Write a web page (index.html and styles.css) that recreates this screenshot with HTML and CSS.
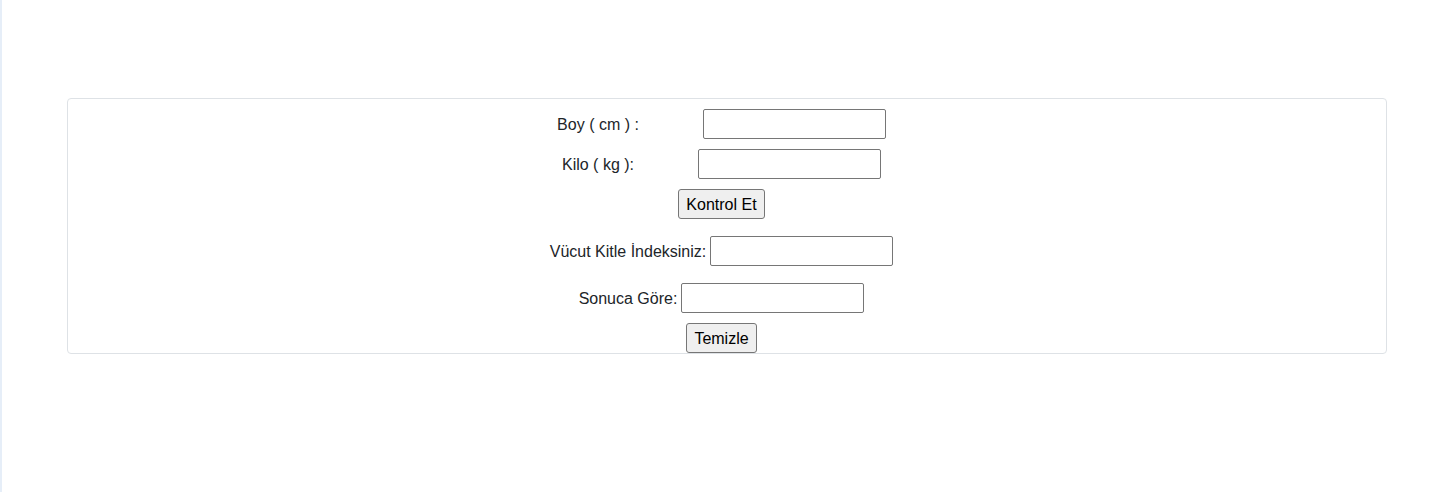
FILE: index.html
```html
<!DOCTYPE html>
<html lang="tr">
<head>
<meta charset="utf-8">
<title>Vücut Kitle İndeksi</title>
<link rel="stylesheet" href="styles.css">
</head>
<body>
<div class="page">
  <div class="strip"></div>
  <main class="main">
    <div class="card">
      <div class="row row-first">
        <label class="label label-wide">Boy ( cm ) :</label>
        <input class="field" type="text">
      </div>
      <div class="row row-gap">
        <label class="label label-wide">Kilo ( kg ):</label>
        <input class="field" type="text">
      </div>
      <div class="row row-gap">
        <button class="btn" type="button">Kontrol Et</button>
      </div>
      <div class="row row-gap-lg">
        <label class="label">Vücut Kitle İndeksiniz:</label>
        <input class="field" type="text">
      </div>
      <div class="row row-gap-lg">
        <label class="label">Sonuca Göre:</label>
        <input class="field" type="text">
      </div>
      <div class="row row-gap">
        <button class="btn" type="button">Temizle</button>
      </div>
    </div>
  </main>
</div>
</body>
</html>
```
FILE: styles.css
```css
html, body {
  margin: 0;
  padding: 0;
  background: #ffffff;
}
body {
  font-family: "Liberation Sans", Arial, Helvetica, sans-serif;
  font-size: 16px;
  color: #212529;
}
.page {
  display: flex;
  min-height: 492px;
}
.strip {
  width: 2px;
  flex: 0 0 2px;
  background: #e6eef8;
}
.main {
  flex: 1;
  display: flex;
  justify-content: center;
  align-items: flex-start;
  padding-top: 98px;
}
.card {
  box-sizing: border-box;
  width: 1320px;
  border: 1px solid #dee2e6;
  border-radius: 4px;
  padding: 10px 10px 0 0;
  display: flex;
  flex-direction: column;
  align-items: center;
}
.row {
  display: flex;
  align-items: center;
  justify-content: center;
  height: 30px;
}
.row-gap { margin-top: 10px; }
.row-gap-lg { margin-top: 17px; }
.label {
  margin-right: 4px;
  padding-top: 2px;
  line-height: 20px;
}
.label-wide {
  margin-right: 64px;
}
.field {
  box-sizing: border-box;
  width: 183px;
  height: 30px;
  border: 1px solid #767676;
  border-radius: 2px;
  padding: 1px 2px;
  font-family: "Liberation Sans", Arial, sans-serif;
  font-size: 13px;
  background: #fff;
}
.btn {
  box-sizing: border-box;
  height: 30px;
  padding: 2px 7px 0;
  border: 1px solid #767676;
  border-radius: 3px;
  background: #efefef;
  color: #000;
  font-family: "Liberation Sans", Arial, sans-serif;
  font-size: 16px;
  line-height: 20px;
}
```
